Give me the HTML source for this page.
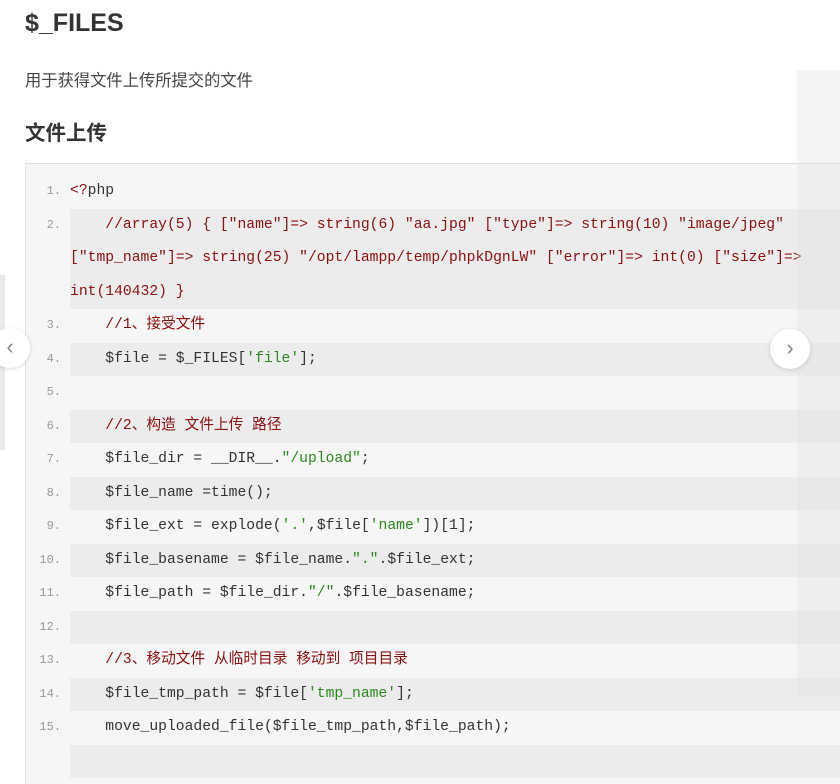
<!DOCTYPE html>
<html><head><meta charset="utf-8"><style>
body{margin:0;width:840px;height:758px;overflow:hidden;background:#fff;font-family:"Liberation Sans","Noto Sans CJK SC",sans-serif;color:#333;position:relative}
h1{position:absolute;left:25px;top:9px;margin:0;font-size:25px;font-weight:bold;color:#333}
.sub{position:absolute;left:25px;top:67px;font-size:16.3px;color:#444}
h2{position:absolute;left:25px;top:116px;margin:0;font-size:20.5px;font-weight:bold;color:#333}
.code{position:absolute;left:25px;top:163px;width:815px;height:620px;background:#f6f6f6;border-top:1px solid #ddd;border-left:1px solid #e4e4e4}
.row{position:absolute;left:0;right:0;font-family:"Liberation Mono","Noto Sans CJK SC",monospace;font-size:14.7px;line-height:33.5px;white-space:pre}
.row .n{position:absolute;right:780px;font-size:12px;color:#999;width:40px;text-align:right}
.row .c{position:absolute;left:44px;right:0;padding-left:0}
.alt .c{background:#ececec}
.cm{color:#8b1010}.s{color:#2a8a1a}
.lp{position:absolute;left:0;top:275px;width:5px;height:175px;background:#e8eaec}
.rp{position:absolute;left:797px;top:70px;width:43px;height:627px;background:rgba(225,228,230,0.4)}
.btn{position:absolute;width:40px;height:40px;border-radius:50%;background:#fff;box-shadow:0 1px 4px rgba(0,0,0,.15);color:#888;font-size:22px;text-align:center;line-height:38px}
</style></head><body>
<h1>$_FILES</h1>
<div class="sub">用于获得文件上传所提交的文件</div>
<h2>文件上传</h2>
<div class="lp"></div>
<div class="code">
<div class="row" style="top:11px"><span class="n">1.</span><span class="c"><span class="cm">&lt;?</span>php</span></div>
<div class="row alt" style="top:44.5px;height:100.5px"><span class="n">2.</span><span class="c cm" style="height:100.5px">    //array(5) { ["name"]=&gt; string(6) "aa.jpg" ["type"]=&gt; string(10) "image/jpeg"
["tmp_name"]=&gt; string(25) "/opt/lampp/temp/phpkDgnLW" ["error"]=&gt; int(0) ["size"]=&gt;
int(140432) }</span></div>
<div class="row" style="top:145px"><span class="n">3.</span><span class="c cm">    //1、接受文件</span></div>
<div class="row alt" style="top:178.5px"><span class="n">4.</span><span class="c">    $file = $_FILES[<span class="s">'file'</span>];</span></div>
<div class="row" style="top:212px"><span class="n">5.</span><span class="c"> </span></div>
<div class="row alt" style="top:245.5px"><span class="n">6.</span><span class="c cm">    //2、构造 文件上传 路径</span></div>
<div class="row" style="top:279px"><span class="n">7.</span><span class="c">    $file_dir = __DIR__.<span class="s">"/upload"</span>;</span></div>
<div class="row alt" style="top:312.5px"><span class="n">8.</span><span class="c">    $file_name =time();</span></div>
<div class="row" style="top:346px"><span class="n">9.</span><span class="c">    $file_ext = explode(<span class="s">'.'</span>,$file[<span class="s">'name'</span>])[1];</span></div>
<div class="row alt" style="top:379.5px"><span class="n">10.</span><span class="c">    $file_basename = $file_name.<span class="s">"."</span>.$file_ext;</span></div>
<div class="row" style="top:413px"><span class="n">11.</span><span class="c">    $file_path = $file_dir.<span class="s">"/"</span>.$file_basename;</span></div>
<div class="row alt" style="top:446.5px"><span class="n">12.</span><span class="c"> </span></div>
<div class="row" style="top:480px"><span class="n">13.</span><span class="c cm">    //3、移动文件 从临时目录 移动到 项目目录</span></div>
<div class="row alt" style="top:513.5px"><span class="n">14.</span><span class="c">    $file_tmp_path = $file[<span class="s">'tmp_name'</span>];</span></div>
<div class="row" style="top:547px"><span class="n">15.</span><span class="c">    move_uploaded_file($file_tmp_path,$file_path);</span></div>
<div class="row alt" style="top:580.5px"><span class="n"></span><span class="c"> </span></div>
</div>
<div class="rp"></div>
<div class="btn" style="left:-10px;top:328px">‹</div>
<div class="btn" style="left:770px;top:329px">›</div>
</body></html>
